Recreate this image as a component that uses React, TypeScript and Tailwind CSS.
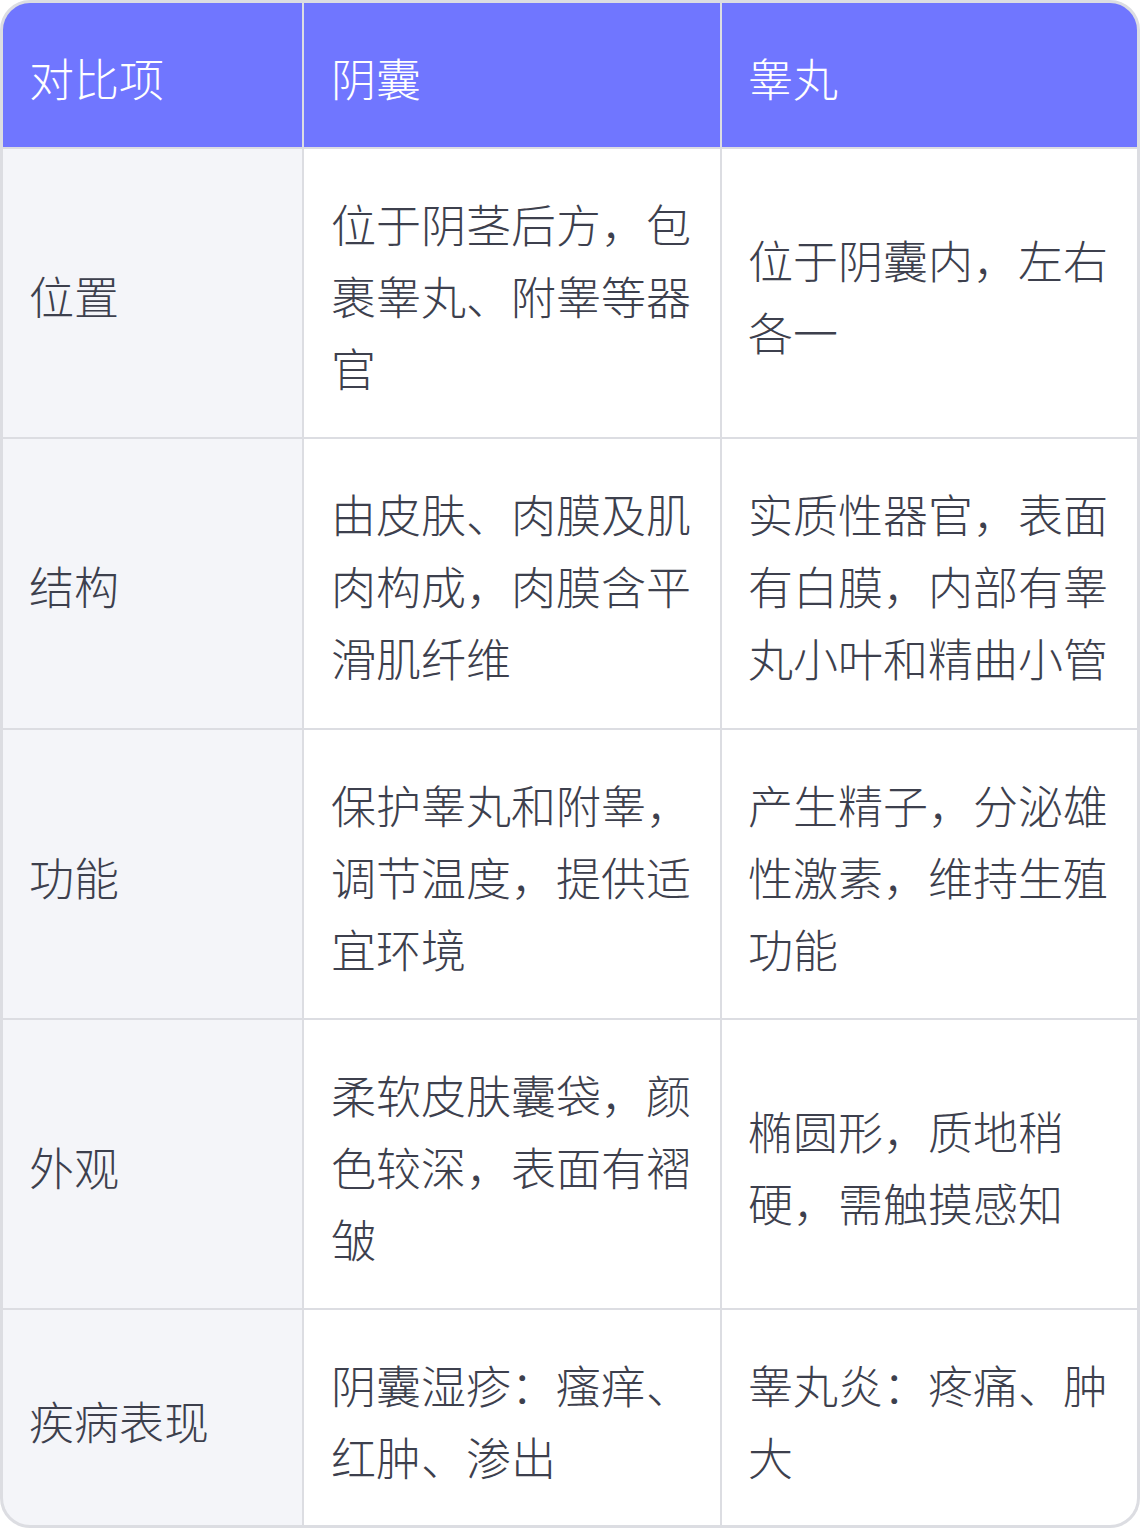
import React from "react";

const rows: [string, string, string][] = [
  ["位置", "位于阴茎后方，包裹睾丸、附睾等器官", "位于阴囊内，左右各一"],
  ["结构", "由皮肤、肉膜及肌肉构成，肉膜含平滑肌纤维", "实质性器官，表面有白膜，内部有睾丸小叶和精曲小管"],
  ["功能", "保护睾丸和附睾，调节温度，提供适宜环境", "产生精子，分泌雄性激素，维持生殖功能"],
  ["外观", "柔软皮肤囊袋，颜色较深，表面有褶皱", "椭圆形，质地稍硬，需触摸感知"],
  ["疾病表现", "阴囊湿疹：瘙痒、红肿、渗出", "睾丸炎：疼痛、肿大"],
];

export default function App() {
  return (
    <div
      className="w-[1140px] h-[1528px] bg-white font-light"
      style={{ fontFamily: '"Noto Sans CJK SC", "Noto Sans", sans-serif' }}
    >
      <div className="w-full h-full rounded-[30px] border-[3px] border-[#dcdde2] overflow-hidden bg-[#dcdde2]">
        <div className="grid grid-cols-[299px_416px_415px] gap-[2px] text-[45px] leading-[72px] h-full grid-rows-[144px_1fr_1fr_1fr_1fr_215px]">
          {["对比项", "阴囊", "睾丸"].map((h, i) => (
            <div key={h} className={`bg-[#7076ff] text-white flex items-center pt-[6px] ${i === 0 ? "pl-[26px] pr-[24px]" : i === 1 ? "pl-[27px] pr-[24px]" : "pl-[26px] pr-[24px]"}`}>
              {h}
            </div>
          ))}
          {rows.map((r) => (
            <React.Fragment key={r[0]}>
              <div className="bg-[#f4f5f9] text-[#3d404d] pl-[26px] pr-[24px] flex items-center pt-[6px]">{r[0]}</div>
              <div className="bg-white text-[#3d404d] pl-[27px] pr-[24px] flex items-center pt-[6px]">{r[1]}</div>
              <div className="bg-white text-[#3d404d] pl-[26px] pr-[24px] flex items-center pt-[6px]">{r[2]}</div>
            </React.Fragment>
          ))}
        </div>
      </div>
    </div>
  );
}
